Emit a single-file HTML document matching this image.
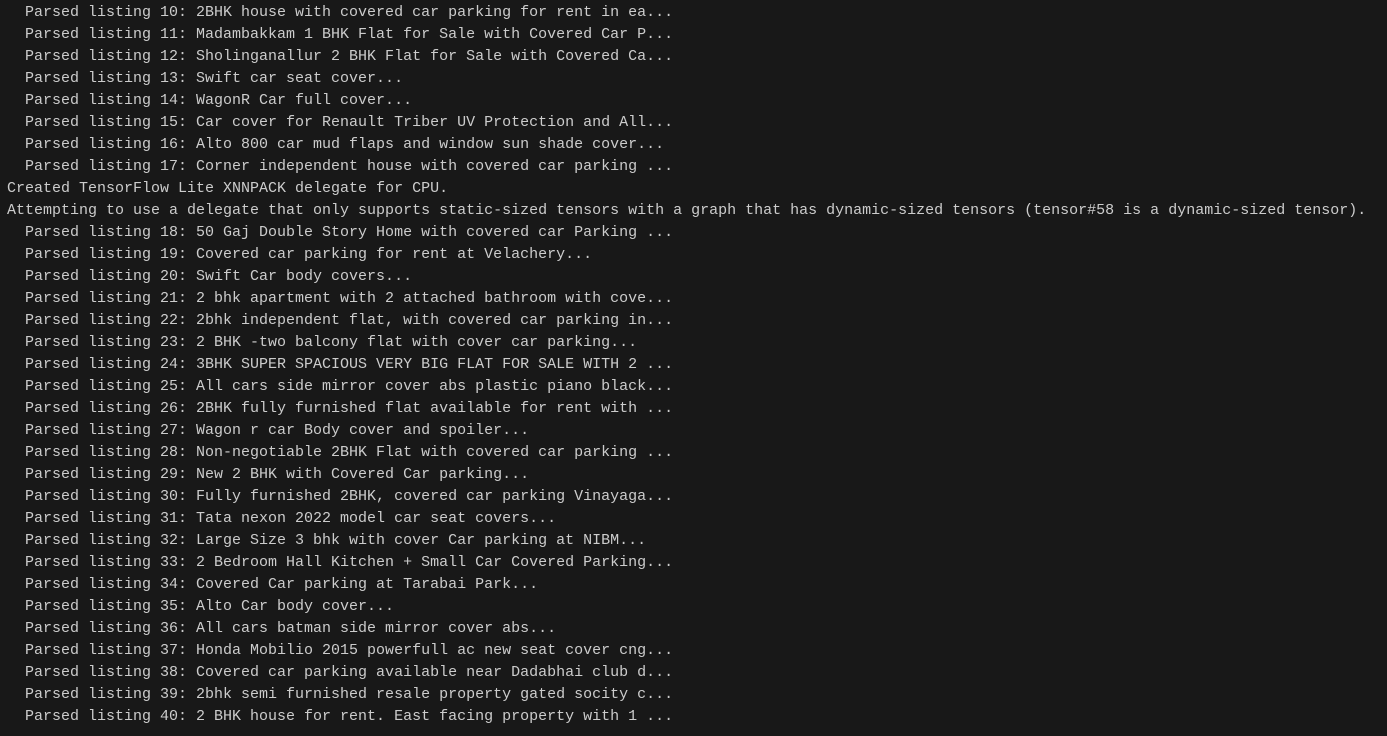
<!DOCTYPE html>
<html><head><style>
html,body{margin:0;padding:0;background:#181818;width:1387px;height:736px;overflow:hidden}
pre{margin:0;position:absolute;left:7px;top:2px;font-family:"Liberation Mono",monospace;font-size:15px;line-height:22px;color:#cccccc;white-space:pre}
</style></head><body><pre>  Parsed listing 10: 2BHK house with covered car parking for rent in ea...
  Parsed listing 11: Madambakkam 1 BHK Flat for Sale with Covered Car P...
  Parsed listing 12: Sholinganallur 2 BHK Flat for Sale with Covered Ca...
  Parsed listing 13: Swift car seat cover...
  Parsed listing 14: WagonR Car full cover...
  Parsed listing 15: Car cover for Renault Triber UV Protection and All...
  Parsed listing 16: Alto 800 car mud flaps and window sun shade cover...
  Parsed listing 17: Corner independent house with covered car parking ...
Created TensorFlow Lite XNNPACK delegate for CPU.
Attempting to use a delegate that only supports static-sized tensors with a graph that has dynamic-sized tensors (tensor#58 is a dynamic-sized tensor).
  Parsed listing 18: 50 Gaj Double Story Home with covered car Parking ...
  Parsed listing 19: Covered car parking for rent at Velachery...
  Parsed listing 20: Swift Car body covers...
  Parsed listing 21: 2 bhk apartment with 2 attached bathroom with cove...
  Parsed listing 22: 2bhk independent flat, with covered car parking in...
  Parsed listing 23: 2 BHK -two balcony flat with cover car parking...
  Parsed listing 24: 3BHK SUPER SPACIOUS VERY BIG FLAT FOR SALE WITH 2 ...
  Parsed listing 25: All cars side mirror cover abs plastic piano black...
  Parsed listing 26: 2BHK fully furnished flat available for rent with ...
  Parsed listing 27: Wagon r car Body cover and spoiler...
  Parsed listing 28: Non-negotiable 2BHK Flat with covered car parking ...
  Parsed listing 29: New 2 BHK with Covered Car parking...
  Parsed listing 30: Fully furnished 2BHK, covered car parking Vinayaga...
  Parsed listing 31: Tata nexon 2022 model car seat covers...
  Parsed listing 32: Large Size 3 bhk with cover Car parking at NIBM...
  Parsed listing 33: 2 Bedroom Hall Kitchen + Small Car Covered Parking...
  Parsed listing 34: Covered Car parking at Tarabai Park...
  Parsed listing 35: Alto Car body cover...
  Parsed listing 36: All cars batman side mirror cover abs...
  Parsed listing 37: Honda Mobilio 2015 powerfull ac new seat cover cng...
  Parsed listing 38: Covered car parking available near Dadabhai club d...
  Parsed listing 39: 2bhk semi furnished resale property gated socity c...
  Parsed listing 40: 2 BHK house for rent. East facing property with 1 ...</pre></body></html>
